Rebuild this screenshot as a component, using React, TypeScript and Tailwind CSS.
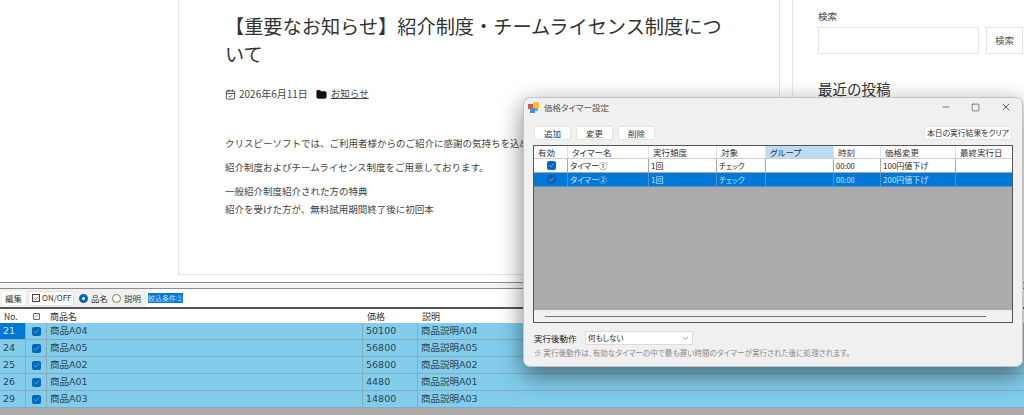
import { CalendarCheck, Check, ChevronDown, Folder, Minus, Square, X } from 'lucide-react'

const products = [
  { no: '21', name: '商品A04', price: '50100', desc: '商品説明A04' },
  { no: '24', name: '商品A05', price: '56800', desc: '商品説明A05' },
  { no: '25', name: '商品A02', price: '56800', desc: '商品説明A02' },
  { no: '26', name: '商品A01', price: '4480', desc: '商品説明A01' },
  { no: '29', name: '商品A03', price: '14800', desc: '商品説明A03' },
]

const font = { fontFamily: '"Noto Sans CJK JP", "Noto Sans", sans-serif' }
const rowFont = { fontFamily: '"DejaVu Sans", "Noto Sans CJK JP", sans-serif' }

function BlueCheck({ dim }: { dim?: boolean }) {
  return (
    <span className={`flex items-center justify-center w-[9px] h-[9px] rounded-[2px] ${dim ? 'bg-[#0a62b8]' : 'bg-[#0067c0]'}`}>
      <Check size={7} strokeWidth={2} className="text-[#b8d4ee]" />
    </span>
  )
}

function WinButton({ label, className }: { label: string; className: string }) {
  return (
    <div className={`flex items-center justify-center h-[14px] bg-white rounded-[2px] border border-[#e4e4e4] leading-none text-[#333] whitespace-nowrap ${className}`}>
      {label}
    </div>
  )
}

function TimerRow({ name, time, change, selected }: { name: string; time: string; change: string; selected?: boolean }) {
  const cell = `flex items-center h-full border-r pl-[2px] ${selected ? 'border-[#5a8fc4]' : 'border-[#a8a8a8]'}`
  return (
    <div className={`flex h-[14px] text-[8px] leading-none border-b ${selected ? 'bg-[#0078d7] text-[#cfe4f7] border-[#5a8fc4]' : 'bg-white text-[#222] border-[#a8a8a8]'}`}>
      <div className={`${cell} w-[34px] justify-center`}>
        <BlueCheck dim={selected} />
      </div>
      <div className={`${cell} w-[81px]`}>{name}</div>
      <div className={`${cell} w-[68px]`}>1回</div>
      <div className={`${cell} w-[49px] text-[7.5px]`}>チェック</div>
      <div className={`${cell} w-[68px]`}></div>
      <div className={`${cell} w-[47px] text-[7.5px]`}>{time}</div>
      <div className={`${cell} w-[75px]`}>{change}</div>
      <div className="flex-1"></div>
    </div>
  )
}

function TimerDialog() {
  const headCell = 'flex items-center h-full pl-[4px] border-r border-[#e2e2e2]'
  return (
    <div className="absolute left-[523px] top-[97px] w-[500px] h-[270px] flex flex-col bg-[#f0f0f0] rounded-[7px] border border-[#c4c4c4] shadow-[0_8px_24px_rgba(0,0,0,0.5)] [font-feature-settings:'palt']">
      <div className="flex items-center h-[16px] pl-[4px] mt-px">
        <svg width="11" height="11" viewBox="0 0 11 11" className="mr-[5px]">
          <rect x="0" y="2" width="5" height="5" fill="#e0533c" />
          <rect x="5" y="0" width="6" height="6" fill="#f2c230" />
          <rect x="2" y="6" width="5" height="5" fill="#4a8fdc" />
          <rect x="7" y="6" width="3" height="3" fill="#9a9a9a" />
        </svg>
        <span className="text-[8.5px] leading-none text-[#555]">価格タイマー設定</span>
        <div className="flex items-center ml-auto mr-[10px] gap-[20px] text-[#333]">
          <Minus size={10} strokeWidth={1.5} />
          <Square size={9} strokeWidth={1.5} />
          <X size={12} strokeWidth={1.5} />
        </div>
      </div>
      <div className="flex items-center h-[14px] mt-[11px] pl-[10px] pr-[10px]">
        <WinButton label="追加" className="w-[37px] text-[8.5px]" />
        <WinButton label="変更" className="w-[37px] ml-[5px] text-[8.5px]" />
        <WinButton label="削除" className="w-[37px] ml-[5px] text-[8.5px]" />
        <WinButton label="本日の実行結果をクリア" className="w-[88px] ml-auto text-[7.8px]" />
      </div>
      <div className="flex flex-col h-[178px] mt-[5px] mx-[9px] border border-[#555] bg-[#ababab]">
        <div className="flex h-[13px] bg-white text-[8.5px] leading-none text-[#333] border-b border-[#d0d0d0]">
          <div className={`${headCell} w-[34px]`}>有効</div>
          <div className={`${headCell} w-[81px]`}>タイマー名</div>
          <div className={`${headCell} w-[68px]`}>実行頻度</div>
          <div className={`${headCell} w-[49px]`}>対象</div>
          <div className={`${headCell} w-[68px] bg-[#bcdcf4]`}>グループ</div>
          <div className={`${headCell} w-[47px]`}>時刻</div>
          <div className={`${headCell} w-[75px]`}>価格変更</div>
          <div className="flex items-center flex-1 h-full pl-[4px]">最終実行日</div>
        </div>
        <TimerRow name="タイマー①" time="00:00" change="100円値下げ" />
        <TimerRow name="タイマー②" time="00:00" change="200円値下げ" selected />
        <div className="flex-1"></div>
        <div className="flex items-center h-[12px] px-[11px] bg-[#f0f0f0]">
          <div className="w-[441px] h-px bg-[#777]"></div>
        </div>
      </div>
      <div className="flex items-center h-[14px] mt-[8px] pl-[10px]">
        <span className="w-[51px] text-[8.5px] leading-none text-[#222]">実行後動作</span>
        <div className="flex items-center justify-between w-[108px] h-[14px] pl-[2px] pr-[2px] bg-white border border-[#dcdcdc] text-[7.5px] leading-none text-[#222]">
          何もしない
          <ChevronDown size={9} className="text-[#777]" />
        </div>
      </div>
      <div className="h-[12px] mt-[2px] pl-[10px] text-[7.6px] leading-[12px] text-[#8a8a8a] whitespace-nowrap">
        ※ 実行後動作は、有効なタイマーの中で最も遅い時間のタイマーが実行された後に処理されます。
      </div>
    </div>
  )
}

export default function App() {
  return (
    <main className="relative w-[1024px] h-[415px] overflow-hidden bg-white text-[#333]" style={font}>
      <section className="flex items-start h-[282px] bg-white">
        <article className="flex flex-col w-[602px] h-[275px] ml-[178px] pl-[46px] pt-[12px] border-l border-r border-b border-[#e4e4e4]">
          <h1 className="w-[510px] text-[19.2px] leading-[28px] font-normal text-[#333]">
            【重要なお知らせ】紹介制度・チームライセンス制度について
          </h1>
          <div className="flex items-center h-[16px] mt-[18px] text-[10px] leading-none text-[#444]">
            <CalendarCheck size={11} strokeWidth={2} className="mr-[3px]" />
            <span>2026年6月11日</span>
            <Folder size={11} fill="#111" className="ml-[8px] mr-[4px] text-[#111]" />
            <span className="text-[9.5px] underline">お知らせ</span>
          </div>
          <div className="mt-[34px] text-[9.5px] leading-[14px] text-[#444] whitespace-nowrap">
            <p>クリスピーソフトでは、ご利用者様からのご紹介に感謝の気持ちを込めて</p>
            <p className="mt-[10px]">紹介制度およびチームライセンス制度をご用意しております。</p>
            <p className="mt-[10px]">一般紹介制度紹介された方の特典</p>
            <p className="mt-[4px]">紹介を受けた方が、無料試用期間終了後に初回本</p>
          </div>
        </article>
        <aside className="flex flex-col h-[282px] ml-[12px] pl-[25px] border-l border-[#e8e8e8] flex-1">
          <div className="mt-[9px] text-[9.5px] leading-[14px] text-[#444]">検索</div>
          <div className="flex mt-[4px]">
            <div className="w-[161px] h-[27px] border border-[#e4e4e4]"></div>
            <div className="flex items-center justify-center w-[37px] h-[27px] ml-[7px] border border-[#e4e4e4] text-[9.5px] text-[#555]">検索</div>
          </div>
          <h2 className="mt-[25px] text-[14.5px] leading-[20px] font-normal text-[#333]">最近の投稿</h2>
        </aside>
      </section>

      <section className="flex flex-col h-[133px] bg-[#ababab] border-t border-[#8c8c8c]">
        <div className="h-[5px] bg-[#f4f4f4] border-b border-[#8c8c8c] box-content"></div>
        <div className="flex items-center h-[18px] pl-[2px] bg-[#f0f0f0] text-[8.5px] leading-none text-[#333] border-b-2 border-[#555] box-content">
          <div className="flex items-center justify-center w-[23px] h-[14px] bg-white rounded-[2px]">編集</div>
          <div className="flex items-center w-[46px] h-[15px] ml-[3px] pl-[3px] bg-white rounded-[2px] border border-[#e0e0e0] text-[8px]">
            <span className="flex items-center justify-center w-[8px] h-[8px] mr-[2px] border border-[#444]">
              <Check size={7} strokeWidth={2.5} className="text-[#222]" />
            </span>
            ON/OFF
          </div>
          <span className="w-[9px] h-[9px] ml-[5px] rounded-full border-[3px] border-[#0067c0] bg-white"></span>
          <span className="ml-[3px]">品名</span>
          <span className="w-[9px] h-[9px] ml-[4px] rounded-full border border-[#777] bg-white"></span>
          <span className="ml-[3px]">説明</span>
          <div className="flex items-center flex-1 h-[18px] ml-[5px] pl-[2px] bg-white">
            <span className="bg-[#0078d7] text-[#cfe4f7] text-[7px] leading-[10px]">絞込条件②</span>
          </div>
        </div>
        <div className="flex items-center h-[14px] bg-white text-[8.5px] leading-none text-[#333]">
          <div className="w-[26px] pl-[4px]">No.</div>
          <div className="flex items-center justify-center w-[21px]">
            <span className="flex items-center justify-center w-[7px] h-[7px] border border-[#666] rounded-[1px]">
              <Check size={6} strokeWidth={2} />
            </span>
          </div>
          <div className="w-[316px] pl-[3px] text-[9px]">商品名</div>
          <div className="w-[55px] pl-[4px] text-[9px]">価格</div>
          <div className="pl-[4px] text-[9px]">説明</div>
        </div>
        {products.map((p, i) => (
          <div key={p.no} style={rowFont} className="flex items-center h-[17px] bg-[#82cdec] border-b border-[#8aa9bb] text-[9.5px] leading-none text-[#2c4452]">
            <div className={`flex items-center h-full w-[26px] pl-[3px] border-r border-[#8aa9bb] ${i === 0 ? 'bg-[#0078d7] text-[#cfe4f7]' : ''}`}>{p.no}</div>
            <div className="flex items-center justify-center h-full w-[21px] border-r border-[#8aa9bb]">
              <BlueCheck />
            </div>
            <div className="flex items-center h-full w-[316px] pl-[3px] border-r border-[#8aa9bb]">{p.name}</div>
            <div className="flex items-center h-full w-[55px] pl-[3px] border-r border-[#8aa9bb]">{p.price}</div>
            <div className="flex items-center h-full pl-[3px]">{p.desc}</div>
          </div>
        ))}
      </section>

      <TimerDialog />
    </main>
  )
}
